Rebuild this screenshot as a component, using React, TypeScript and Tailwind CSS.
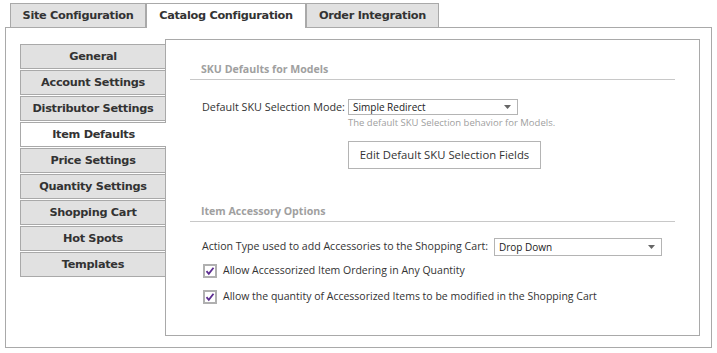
import { useState } from "react";

const navItems = [
  "General",
  "Account Settings",
  "Distributor Settings",
  "Item Defaults",
  "Price Settings",
  "Quantity Settings",
  "Shopping Cart",
  "Hot Spots",
  "Templates",
];

const tabs = [
  { label: "Site Configuration", width: "w-[136px]" },
  { label: "Catalog Configuration", width: "w-[160px]" },
  { label: "Order Integration", width: "w-[133px]" },
];

const boldFont = { fontFamily: '"DejaVu Sans", Verdana, sans-serif' };
const uiFont = { fontFamily: '"Open Sans", "Noto Sans", sans-serif' };

function Select({ value, className }: { value: string; className: string }) {
  return (
    <div className={`flex items-center justify-between border border-[#b4b4b4] bg-white pl-[4px] pr-[6px] text-[10px] text-[#222] ${className}`}>
      <span>{value}</span>
      <svg width="7" height="4" viewBox="0 0 7 4">
        <path d="M0 0 L7 0 L3.5 4 Z" fill="#666" />
      </svg>
    </div>
  );
}

function Check({ label }: { label: string }) {
  return (
    <label className="flex items-center h-[16px] ml-[13px] gap-[6px] text-[10.5px] text-[#333]">
      <svg width="14" height="14" viewBox="0 0 14 14">
        <rect x="1" y="1" width="12" height="12" fill="#fff" stroke="#b0b0b0" strokeWidth="2" />
        <path d="M3.5 7.2 L5.8 9.8 L10.5 3.8" fill="none" stroke="#5c2d91" strokeWidth="1.8" />
      </svg>
      <span>{label}</span>
    </label>
  );
}

export default function App() {
  const [tab, setTab] = useState("Catalog Configuration");
  const [item, setItem] = useState("Item Defaults");

  return (
    <div className="w-[717px] h-[353px] bg-white">
      {/* Top tabs */}
      <div className="flex items-end pl-[10px] pt-[3px]" style={boldFont}>
        {tabs.map((t) => (
          <button
            key={t.label}
            onClick={() => setTab(t.label)}
            className={
              t.label === tab
                ? `${t.width} h-[25px] -mb-px relative z-10 bg-white border border-b-0 border-[#a9a9a9] text-[11.3px] tracking-[-0.3px] font-bold text-[#333] leading-[22px]`
                : `${t.width} h-[24px] bg-[#e1e1e1] border border-b-0 border-[#a9a9a9] text-[11.3px] tracking-[-0.3px] font-bold text-[#333] leading-[22px]`
            }
          >
            {t.label}
          </button>
        ))}
      </div>

      {/* Outer panel */}
      <div className="ml-[5px] w-[707px] h-[321px] border border-[#a9a9a9] pt-[11px] pl-[14px] pr-[11px] pb-[11px] flex">
        {/* Side nav */}
        <div className="w-[146px] shrink-0 mt-[5px] -mr-px relative z-10 flex flex-col gap-px self-start" style={boldFont}>
          {navItems.map((n) => (
            <button
              key={n}
              onClick={() => setItem(n)}
              className={
                n === item
                  ? "h-[25px] pt-[2px] bg-white border border-r-0 border-[#a9a9a9] text-[11.3px] tracking-[-0.3px] font-bold text-[#333]"
                  : "h-[25px] pt-[2px] bg-[#e1e1e1] border border-[#a9a9a9] text-[11.3px] tracking-[-0.3px] font-bold text-[#333]"
              }
            >
              {n}
            </button>
          ))}
        </div>

        {/* Content panel */}
        <div className="flex-1 border border-[#a9a9a9] px-[24px]" style={uiFont}>
          <div className="mt-[20px] h-[20px] leading-[19px] pl-[11px] border-b border-[#c8c8c8] text-[10.6px] font-bold text-[#a0a0a0]">
            SKU Defaults for Models
          </div>

          <div className="flex items-center mt-[19px] h-[16px]">
            <div className="w-[158px] pl-[12px] text-[10.8px] text-[#333]">Default SKU Selection Mode:</div>
            <Select value="Simple Redirect" className="w-[170px] h-[16px]" />
          </div>
          <div className="ml-[158px] text-[9.5px] leading-[16px] text-[#a0a0a0]">
            The default SKU Selection behavior for Models.
          </div>
          <button className="ml-[158px] mt-[10px] w-[193px] h-[28px] border border-[#b4b4b4] bg-white text-[11.3px] text-[#333]">
            Edit Default SKU Selection Fields
          </button>

          <div className="mt-[33px] h-[20px] leading-[19px] pl-[11px] border-b border-[#c8c8c8] text-[10.6px] font-bold text-[#a0a0a0]">
            Item Accessory Options
          </div>

          <div className="flex items-center mt-[16px] h-[18px]">
            <div className="w-[304px] pl-[12px] text-[10.6px] text-[#333] whitespace-nowrap">
              Action Type used to add Accessories to the Shopping Cart:
            </div>
            <Select value="Drop Down" className="w-[168px] h-[18px]" />
          </div>

          <div className="mt-[7px]">
            <Check label="Allow Accessorized Item Ordering in Any Quantity" />
          </div>
          <div className="mt-[10px]">
            <Check label="Allow the quantity of Accessorized Items to be modified in the Shopping Cart" />
          </div>
        </div>
      </div>
    </div>
  );
}
